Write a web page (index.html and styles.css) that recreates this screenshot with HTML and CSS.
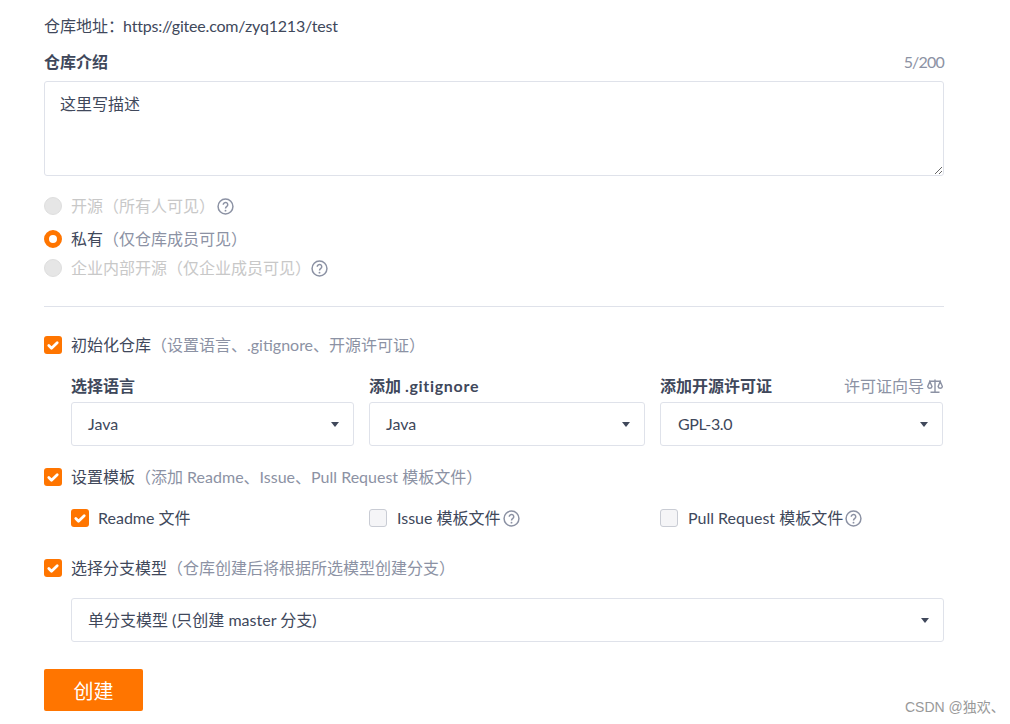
FILE: index.html
```html
<!DOCTYPE html>
<html lang="zh-CN">
<head>
<meta charset="utf-8">
<title>新建仓库</title>
<link rel="stylesheet" href="styles.css">
</head>
<body>
<main class="form">
  <div class="addr">仓库地址：<span class="url">https://gitee.com/zyq1213/test</span></div>
  <div class="intro-head"><span class="strong">仓库介绍</span><span class="count">5/200</span></div>
  <textarea class="desc" rows="4">这里写描述</textarea>

  <div class="radio-group">
    <div class="option row1 disabled"><span class="radio"></span><span>开源</span><span class="note">（所有人可见）</span><svg class="help" viewBox="0 0 16 16"><circle cx="8" cy="8" r="7"/><path d="M5.900 6.300a2.100 2.100 0 1 1 3.300 1.700c-.8.5-1.200.9-1.200 1.800"/><circle class="dot" cx="8" cy="11.900" r=".9"/></svg></div>
    <div class="option row2"><span class="radio on"></span><span>私有</span><span class="note">（仅仓库成员可见）</span></div>
    <div class="option row3 disabled"><span class="radio"></span><span>企业内部开源</span><span class="note">（仅企业成员可见）</span><svg class="help row3-help" viewBox="0 0 16 16"><circle cx="8" cy="8" r="7"/><path d="M5.900 6.300a2.100 2.100 0 1 1 3.300 1.700c-.8.5-1.200.9-1.200 1.800"/><circle class="dot" cx="8" cy="11.900" r=".9"/></svg></div>
  </div>

  <hr class="divider">

  <div class="option check-init"><span class="check on"><svg viewBox="0 0 18 18"><path d="M4.800 9.500l2.700 2.700 5.700-5.500"/></svg></span><span>初始化仓库</span><span class="note">（设置语言、.gitignore、开源许可证）</span></div>

  <div class="fields">
    <div class="field">
      <div class="field-label"><span class="strong">选择语言</span></div>
      <div class="select"><span>Java</span><i class="caret"></i></div>
    </div>
    <div class="field">
      <div class="field-label"><span class="strong">添加 <span class="spaced">.gitignore</span></span></div>
      <div class="select"><span>Java</span><i class="caret"></i></div>
    </div>
    <div class="field">
      <div class="field-label"><span class="strong">添加开源许可证</span><span class="guide">许可证向导 <svg class="scale" viewBox="0 0 16 14"><path d="M8 .5v12.500M3.500 13.200h9M2.500 2.200h11"/><path d="M2.800 2.500L.7 7.500a2.200 2.200 0 0 0 4.300 0zM13.200 2.500l-2.100 5a2.200 2.200 0 0 0 4.300 0z"/></svg></span></div>
      <div class="select"><span class="narrow">GPL-3.0</span><i class="caret"></i></div>
    </div>
  </div>

  <div class="option check-tpl"><span class="check on"><svg viewBox="0 0 18 18"><path d="M4.800 9.500l2.700 2.700 5.700-5.500"/></svg></span><span>设置模板</span><span class="note">（添加 Readme、Issue、Pull Request 模板文件）</span></div>

  <div class="fields templates">
    <div class="option"><span class="check on"><svg viewBox="0 0 18 18"><path d="M4.800 9.500l2.700 2.700 5.700-5.500"/></svg></span><span>Readme 文件</span></div>
    <div class="option"><span class="check"></span><span>Issue 模板文件</span><svg class="help tight" viewBox="0 0 16 16"><circle cx="8" cy="8" r="7"/><path d="M5.900 6.300a2.100 2.100 0 1 1 3.300 1.700c-.8.5-1.200.9-1.200 1.800"/><circle class="dot" cx="8" cy="11.900" r=".9"/></svg></div>
    <div class="option"><span class="check"></span><span>Pull Request 模板文件</span><svg class="help tight" viewBox="0 0 16 16"><circle cx="8" cy="8" r="7"/><path d="M5.900 6.300a2.100 2.100 0 1 1 3.300 1.700c-.8.5-1.200.9-1.200 1.800"/><circle class="dot" cx="8" cy="11.900" r=".9"/></svg></div>
  </div>

  <div class="option check-branch"><span class="check on"><svg viewBox="0 0 18 18"><path d="M4.800 9.500l2.700 2.700 5.700-5.500"/></svg></span><span>选择分支模型</span><span class="note">（仓库创建后将根据所选模型创建分支）</span></div>

  <div class="select wide"><span>单分支模型 (只创建 master 分支)</span><i class="caret"></i></div>

  <button class="submit" type="button">创建</button>
</main>
<div class="watermark">CSDN @独欢、</div>
</body>
</html>
```
FILE: styles.css
```css
* { box-sizing: border-box; }
html, body { margin: 0; height: 724px; overflow: hidden; }
body {
  background: #fff;
  color: #40485b;
  font-family: Lato, "Noto Sans CJK SC", sans-serif;
  font-size: 16px;
  line-height: 20px;
  text-spacing-trim: space-all;
  position: relative;
}
.form { width: 900px; margin-left: 44px; padding-top: 16px; }
.addr { height: 20px; }
.url { letter-spacing: -.2px; margin-left: -1px; }
.strong { font-weight: 700; color: #40485b; }
.spaced { letter-spacing: .7px; }
.narrow { letter-spacing: -.35px; margin-left: 1px; }
.intro-head { display: flex; justify-content: space-between; align-items: center; margin-top: 16px; height: 20px; }
.count { color: #8c92a4; letter-spacing: -.8px; }
.desc {
  display: block;
  width: 100%;
  height: 95px;
  margin-top: 9px;
  padding: 12px 15px;
  border: 1px solid #dfe2ea;
  border-radius: 3px;
  font: inherit;
  color: #40485b;
  outline: none;
  resize: vertical;
}
.option { display: flex; align-items: center; height: 20px; white-space: nowrap; }
.note { color: #8c92a4; }
.radio-group { display: block; }
.row1 { margin-top: 20px; }
.row2 { margin-top: 13px; }
.row3 { margin-top: 9px; }
.radio {
  width: 18px; height: 18px; border-radius: 50%;
  margin-right: 9px; flex: none;
  background: #e6e6e6; border: 1px solid #dedede;
}
.radio.on { background: #fff; border: 5px solid #ff7500; }
.disabled, .disabled .note { color: #c8c8c8; }
.help { width: 17px; height: 17px; margin-left: 2px; flex: none; }
.help.row3-help { margin-left: 0; }
.help.tight { margin-left: 2px; }
.help circle, .help path { fill: none; stroke: #8c92a4; stroke-width: 1.400; }
.help .dot { fill: #8c92a4; stroke: none; }
.divider { border: 0; border-top: 1px solid #dfe2ea; margin: 28px 0 0; }
.check {
  width: 18px; height: 18px; border-radius: 3px; flex: none;
  margin-right: 10px;
  background: #f5f5f7; border: 1px solid #c9ccd4;
}
.check.on { background: #ff7500; border: 0; margin-right: 9px; }
.check svg { display: block; width: 18px; height: 18px; }
.check path { fill: none; stroke: #fff; stroke-width: 2.800; stroke-linecap: round; stroke-linejoin: round; }
.check-init { margin-top: 28px; }
.fields { display: grid; grid-template-columns: 283px 276px 283px; column-gap: 15px; margin-left: 27px; width: 873px; }
.field-label { display: flex; justify-content: space-between; align-items: center; height: 20px; margin-top: 21px; margin-bottom: 6px; }
.guide { color: #8c92a4; display: flex; align-items: center; gap: 3px; }
.scale { width: 16px; height: 14px; }
.scale path { fill: none; stroke: #8c92a4; stroke-width: 1.400; }
.select {
  display: flex; justify-content: space-between; align-items: center;
  height: 44px;
  padding: 0 16px;
  border: 1px solid #dfe2ea; border-radius: 3px;
  color: #40485b;
  background: #fff;
}
.select .caret { width: 0; height: 0; border-left: 4.500px solid transparent; border-right: 4.500px solid transparent; border-top: 5px solid #40485b; margin-right: -2px; }
.check-tpl { margin-top: 21px; }
.templates { margin-top: 21px; }
.check-branch { margin-top: 30px; }
.wide { margin: 20px 0 0 27px; }
.submit {
  display: block;
  width: 99px; height: 42px;
  margin-top: 27px;
  background: #ff7500;
  border: 0; border-radius: 2px;
  color: #fff;
  font: inherit;
  font-size: 20px;
  line-height: 42px;
}
.watermark {
  position: absolute;
  left: 905px; top: 697px;
  color: #999;
  font-size: 14px;
  font-family: "Liberation Sans", "Noto Sans CJK SC", sans-serif;
}
```
